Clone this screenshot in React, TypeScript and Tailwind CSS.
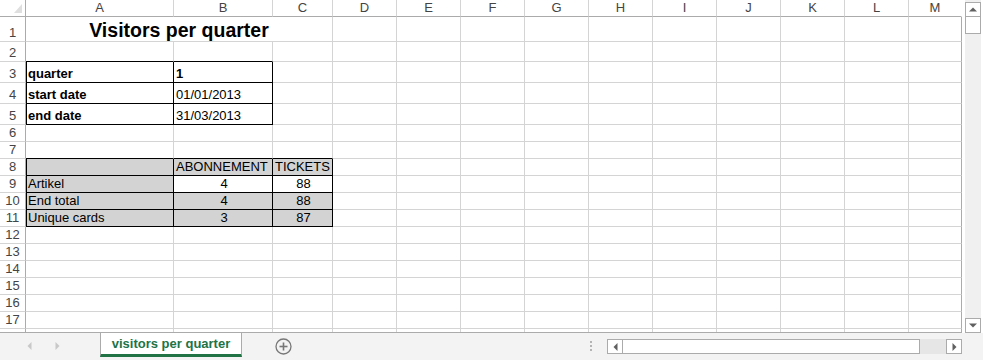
import React from "react";

type CellData = { text: string; bold?: boolean; center?: boolean; gray?: boolean };

const COLS: { w: string; l: string }[] = [
  { w: "w-[148px]", l: "A" },
  { w: "w-[99px]", l: "B" },
  { w: "w-[60px]", l: "C" },
  { w: "w-[64px]", l: "D" },
  { w: "w-[64px]", l: "E" },
  { w: "w-[64px]", l: "F" },
  { w: "w-[64px]", l: "G" },
  { w: "w-[64px]", l: "H" },
  { w: "w-[64px]", l: "I" },
  { w: "w-[64px]", l: "J" },
  { w: "w-[64px]", l: "K" },
  { w: "w-[64px]", l: "L" },
  { w: "w-[53px]", l: "M" },
];

const DATA: Record<string, CellData> = {
  "3-0": { text: "quarter", bold: true },
  "3-1": { text: "1", bold: true },
  "4-0": { text: "start date", bold: true },
  "4-1": { text: "01/01/2013" },
  "5-0": { text: "end date", bold: true },
  "5-1": { text: "31/03/2013" },
  "8-0": { text: "", gray: true },
  "8-1": { text: "ABONNEMENT", gray: true },
  "8-2": { text: "TICKETS", gray: true },
  "9-0": { text: "Artikel", gray: true },
  "9-1": { text: "4", center: true },
  "9-2": { text: "88", center: true },
  "10-0": { text: "End total", gray: true },
  "10-1": { text: "4", center: true, gray: true },
  "10-2": { text: "88", center: true, gray: true },
  "11-0": { text: "Unique cards", gray: true },
  "11-1": { text: "3", center: true, gray: true },
  "11-2": { text: "87", center: true, gray: true },
};

function rowHeight(r: number) {
  if (r === 1) return "h-[25px]";
  if (r === 2) return "h-[20px]";
  if (r >= 3 && r <= 5) return "h-[21px]";
  return "h-[17px]";
}

function inBox1(r: number, c: number) {
  return r >= 3 && r <= 5 && c <= 1;
}
function inBox2(r: number, c: number) {
  return r >= 8 && r <= 11 && c <= 2;
}

function Cell({ r, c }: { r: number; c: number }) {
  const d = DATA[`${r}-${c}`];
  const isM = c === 12;
  const blackRight = inBox1(r, c) || inBox2(r, c);
  const blackBottom = (r >= 2 && r <= 5 && c <= 1) || (r >= 7 && r <= 11 && c <= 2);
  const blackLeft = c === 0 && (inBox1(r, c) || inBox2(r, c));
  const rb = blackRight ? "border-r-black" : isM ? "border-r-[#ababab]" : "border-r-[#d4d4d4]";
  const bb = blackBottom ? "border-b-black" : "border-b-[#d4d4d4]";
  const bl = blackLeft ? "border-l border-l-black pl-[1px]" : "pl-[2px]";
  const bg = d?.gray ? "bg-[#d3d3d3]" : "bg-white";
  return (
    <div
      className={`${COLS[c].w} shrink-0 h-full border-r border-b ${rb} ${bb} ${bl} ${bg} flex items-end pb-[1px] overflow-visible whitespace-nowrap`}
    >
      {d && d.text ? (
        <span
          className={`block w-full text-[13px] leading-[15px] text-black ${d.bold ? "font-bold" : ""} ${d.center ? "text-center" : "text-left"}`}
        >
          {d.text}
        </span>
      ) : null}
    </div>
  );
}

function RowHeader({ r }: { r: number }) {
  return (
    <div className="w-[26px] shrink-0 h-full border-r border-b border-r-[#ababab] border-b-[#d4d4d4] bg-white flex items-end justify-center pb-[1px]">
      {r <= 17 ? <span className="text-[13px] leading-[15px] text-[#444]">{r}</span> : null}
    </div>
  );
}

function Row({ r }: { r: number }) {
  if (r === 1) {
    return (
      <div className={`flex ${rowHeight(r)}`}>
        <RowHeader r={r} />
        <div className="w-[307px] shrink-0 h-full border-r border-b border-[#d4d4d4] flex items-end justify-center pb-[1px]">
          <span className="text-[19.5px] leading-[19px] font-bold text-black whitespace-nowrap">
            Visitors per quarter
          </span>
        </div>
        {COLS.slice(3).map((_, i) => (
          <Cell key={i} r={r} c={i + 3} />
        ))}
      </div>
    );
  }
  return (
    <div className={`flex ${rowHeight(r)}`}>
      <RowHeader r={r} />
      {COLS.map((_, c) => (
        <Cell key={c} r={r} c={c} />
      ))}
    </div>
  );
}

function HeaderRow() {
  return (
    <div className="flex h-[17px]">
      <div className="w-[26px] shrink-0 h-full border-r border-b border-[#ababab] bg-white flex items-end justify-end pr-[3px] pb-[3px]">
        <svg width="8" height="9" viewBox="0 0 8 9">
          <polygon points="0,9 8,0 8,9" fill="#dfdfdf" />
        </svg>
      </div>
      {COLS.map((col, c) => (
        <div
          key={c}
          className={`${col.w} shrink-0 h-full border-r border-b border-b-[#ababab] ${c === 12 ? "border-r-white" : "border-r-[#d4d4d4]"} bg-white flex items-end justify-center pb-[1px]`}
        >
          <span className="text-[13px] leading-[15px] text-[#444]">{col.l}</span>
        </div>
      ))}
    </div>
  );
}

function TriUp() {
  return (
    <svg width="8" height="5" viewBox="0 0 8 5">
      <polygon points="0,4.5 8,4.5 4,0.5" fill="#606060" />
    </svg>
  );
}
function TriDown() {
  return (
    <svg width="8" height="5" viewBox="0 0 8 5">
      <polygon points="0,0.5 8,0.5 4,4.5" fill="#606060" />
    </svg>
  );
}
function TriLeft({ color = "#606060" }: { color?: string }) {
  return (
    <svg width="5" height="8" viewBox="0 0 5 8">
      <polygon points="4.5,0 4.5,8 0.5,4" fill={color} />
    </svg>
  );
}
function TriRight({ color = "#606060" }: { color?: string }) {
  return (
    <svg width="5" height="8" viewBox="0 0 5 8">
      <polygon points="0.5,0 0.5,8 4.5,4" fill={color} />
    </svg>
  );
}

export default function App() {
  const rows = Array.from({ length: 18 }, (_, i) => i + 1);
  return (
    <div className="w-[983px] h-[360px] overflow-hidden bg-white flex flex-col font-['Liberation_Sans',Arial,sans-serif]">
      <div className="flex h-[333px] shrink-0">
        <div className="w-[962px] h-[333px] shrink-0 overflow-hidden border-b border-[#ababab] flex flex-col">
          <HeaderRow />
          {rows.map((r) => (
            <div key={r} className="shrink-0">
              <Row r={r} />
            </div>
          ))}
        </div>
        <div className="ml-[3px] w-[16px] h-[333px] bg-[#f0f0f0] flex flex-col">
          <div className="mt-[2px] h-[15px] border border-[#ababab] bg-white flex items-center justify-center">
            <TriUp />
          </div>
          <div className="h-[17px] border-x border-b border-[#ababab] bg-white" />
          <div className="flex-1" />
          <div className="h-[15px] border border-[#ababab] bg-white flex items-center justify-center">
            <TriDown />
          </div>
        </div>
      </div>
      <div className="h-[27px] bg-[#f3f3f3] flex items-start shrink-0">
        <div className="w-[100px] flex items-start pl-[27px] pt-[9px] gap-[23px]">
          <TriLeft color="#c8c8c8" />
          <TriRight color="#c8c8c8" />
        </div>
        <div className="w-[142px] h-[24px] bg-white border-x border-b-[3px] border-x-[#ababab] border-b-[#217346] flex justify-center pt-[3px]">
          <span className="text-[13px] leading-[15px] font-bold text-[#217346] whitespace-nowrap">
            visitors per quarter
          </span>
        </div>
        <div className="ml-[33px] mt-[5px]">
          <svg width="17" height="17" viewBox="0 0 17 17">
            <circle cx="8.5" cy="8.5" r="7.5" fill="none" stroke="#777" strokeWidth="1.3" />
            <line x1="8.5" y1="4.5" x2="8.5" y2="12.5" stroke="#777" strokeWidth="1.6" />
            <line x1="4.5" y1="8.5" x2="12.5" y2="8.5" stroke="#777" strokeWidth="1.6" />
          </svg>
        </div>
        <div className="flex-1" />
        <div className="mt-[8px] flex flex-col gap-[2px]">
          <div className="w-[2px] h-[2px] bg-[#b4b4b4]" />
          <div className="w-[2px] h-[2px] bg-[#b4b4b4]" />
          <div className="w-[2px] h-[2px] bg-[#b4b4b4]" />
        </div>
        <div className="ml-[15px] mr-[21px] mt-[6px] w-[355px] h-[15px] flex">
          <div className="w-[16px] h-full border border-[#ababab] bg-white flex items-center justify-center">
            <TriLeft />
          </div>
          <div className="w-[297px] h-full border-y border-r border-[#ababab] bg-white" />
          <div className="flex-1 h-full bg-[#e6e6e6]" />
          <div className="w-[16px] h-full border border-[#ababab] bg-white flex items-center justify-center">
            <TriRight />
          </div>
        </div>
      </div>
    </div>
  );
}
